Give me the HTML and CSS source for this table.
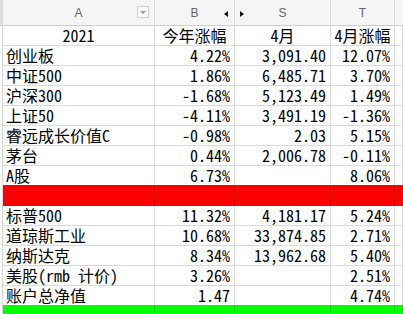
FILE: index.html
```html
<!DOCTYPE html>
<html>
<head>
<meta charset="utf-8">
<link rel="stylesheet" href="styles.css">
</head>
<body>
<div class="sheet">
  <div class="hd strip"></div>
  <div class="hd col-a">A<span class="filter"><span class="tri"></span></span></div>
  <div class="hd col-b">B<span class="hid-l"></span></div>
  <div class="hd col-s">S<span class="hid-r"></span></div>
  <div class="hd">T</div>
  <div class="hd rest"></div>

  <div class="st"></div><div class="c ctr">2021</div><div class="c ctr">今年涨幅</div><div class="c ctr">4月</div><div class="c ctr">4月涨幅</div><div class="c"></div>
  <div class="st"></div><div class="c">创业板</div><div class="c num">4.22%</div><div class="c num">3,091.40</div><div class="c num">12.07%</div><div class="c"></div>
  <div class="st"></div><div class="c">中证500</div><div class="c num">1.86%</div><div class="c num">6,485.71</div><div class="c num">3.70%</div><div class="c"></div>
  <div class="st"></div><div class="c">沪深300</div><div class="c num">-1.68%</div><div class="c num">5,123.49</div><div class="c num">1.49%</div><div class="c"></div>
  <div class="st"></div><div class="c">上证50</div><div class="c num">-4.11%</div><div class="c num">3,491.19</div><div class="c num">-1.36%</div><div class="c"></div>
  <div class="st"></div><div class="c">睿远成长价值C</div><div class="c num">-0.98%</div><div class="c num">2.03</div><div class="c num">5.15%</div><div class="c"></div>
  <div class="st"></div><div class="c">茅台</div><div class="c num">0.44%</div><div class="c num">2,006.78</div><div class="c num">-0.11%</div><div class="c"></div>
  <div class="st"></div><div class="c">A股</div><div class="c num">6.73%</div><div class="c num"></div><div class="c num">8.06%</div><div class="c"></div>
  <div class="st"></div><div class="c red"></div><div class="c red"></div><div class="c red"></div><div class="c red"></div><div class="c red"></div>
  <div class="st"></div><div class="c">标普500</div><div class="c num">11.32%</div><div class="c num">4,181.17</div><div class="c num">5.24%</div><div class="c"></div>
  <div class="st"></div><div class="c">道琼斯工业</div><div class="c num">10.68%</div><div class="c num">33,874.85</div><div class="c num">2.71%</div><div class="c"></div>
  <div class="st"></div><div class="c">纳斯达克</div><div class="c num">8.34%</div><div class="c num">13,962.68</div><div class="c num">5.40%</div><div class="c"></div>
  <div class="st"></div><div class="c">美股(rmb 计价)</div><div class="c num">3.26%</div><div class="c num"></div><div class="c num">2.51%</div><div class="c"></div>
  <div class="st"></div><div class="c">账户总净值</div><div class="c num">1.47</div><div class="c num"></div><div class="c num">4.74%</div><div class="c"></div>
  <div class="st"></div><div class="c green"></div><div class="c green"></div><div class="c green"></div><div class="c green"></div><div class="c green"></div>
</div>
</body>
</html>
```
FILE: styles.css
```css
html, body {
  margin: 0;
  padding: 0;
  background: #fff;
  overflow: hidden;
}
.sheet {
  display: grid;
  grid-template-columns: 3px 152px 80px 96px 64px 1fr;
  grid-template-rows: 26px;
  grid-auto-rows: 20px;
  width: 403px;
}
.hd {
  position: relative;
  box-sizing: border-box;
  background: #f5f5f5;
  border-right: 1px solid #dadada;
  border-bottom: 1px solid #cdcdcd;
  font-family: "Liberation Sans", Arial, sans-serif;
  font-size: 12px;
  color: #666;
  display: flex;
  align-items: center;
  justify-content: center;
}
.hd.strip {
  background: #dcdcdc;
  border-right: none;
}
.hd.rest {
  border-right: none;
}
.filter {
  position: absolute;
  right: 5px;
  top: 6px;
  width: 12px;
  height: 12px;
  box-sizing: border-box;
  border: 1px solid #cfcfcf;
  background: #f9f9f9;
  display: flex;
  align-items: center;
  justify-content: center;
}
.tri {
  width: 0;
  height: 0;
  border-left: 3px solid transparent;
  border-right: 3px solid transparent;
  border-top: 3px solid #9a9a9a;
}
.hid-l {
  position: absolute;
  right: 6px;
  top: 11px;
  width: 0;
  height: 0;
  border-top: 3px solid transparent;
  border-bottom: 3px solid transparent;
  border-right: 4px solid #111;
}
.hid-r {
  position: absolute;
  left: 5px;
  top: 11px;
  width: 0;
  height: 0;
  border-top: 3px solid transparent;
  border-bottom: 3px solid transparent;
  border-left: 4px solid #111;
}
.st {
  box-sizing: border-box;
  border-right: 1px solid #d4d4d4;
  background: #fff;
}
.c {
  box-sizing: border-box;
  border-right: 1px solid #dadada;
  border-bottom: 1px solid #dadada;
  font-family: "Noto Sans Mono CJK SC", "Noto Sans CJK SC", "Liberation Mono", monospace;
  font-size: 16px;
  font-weight: 300;
  line-height: 19px;
  color: #000;
  padding: 0 3px;
  white-space: nowrap;
}
.ctr {
  text-align: center;
  padding: 0;
}
.num {
  text-align: right;
  padding-right: 4px;
}
.red {
  background: #ff0000;
  border-right-color: #d90000;
  border-bottom-color: #ff0000;
  box-shadow: 0 -1px 0 #ff0000;
}
.green {
  background: #00ff00;
  border-right-color: #00d400;
  box-shadow: 0 -1px 0 #00ff00;
}
```
